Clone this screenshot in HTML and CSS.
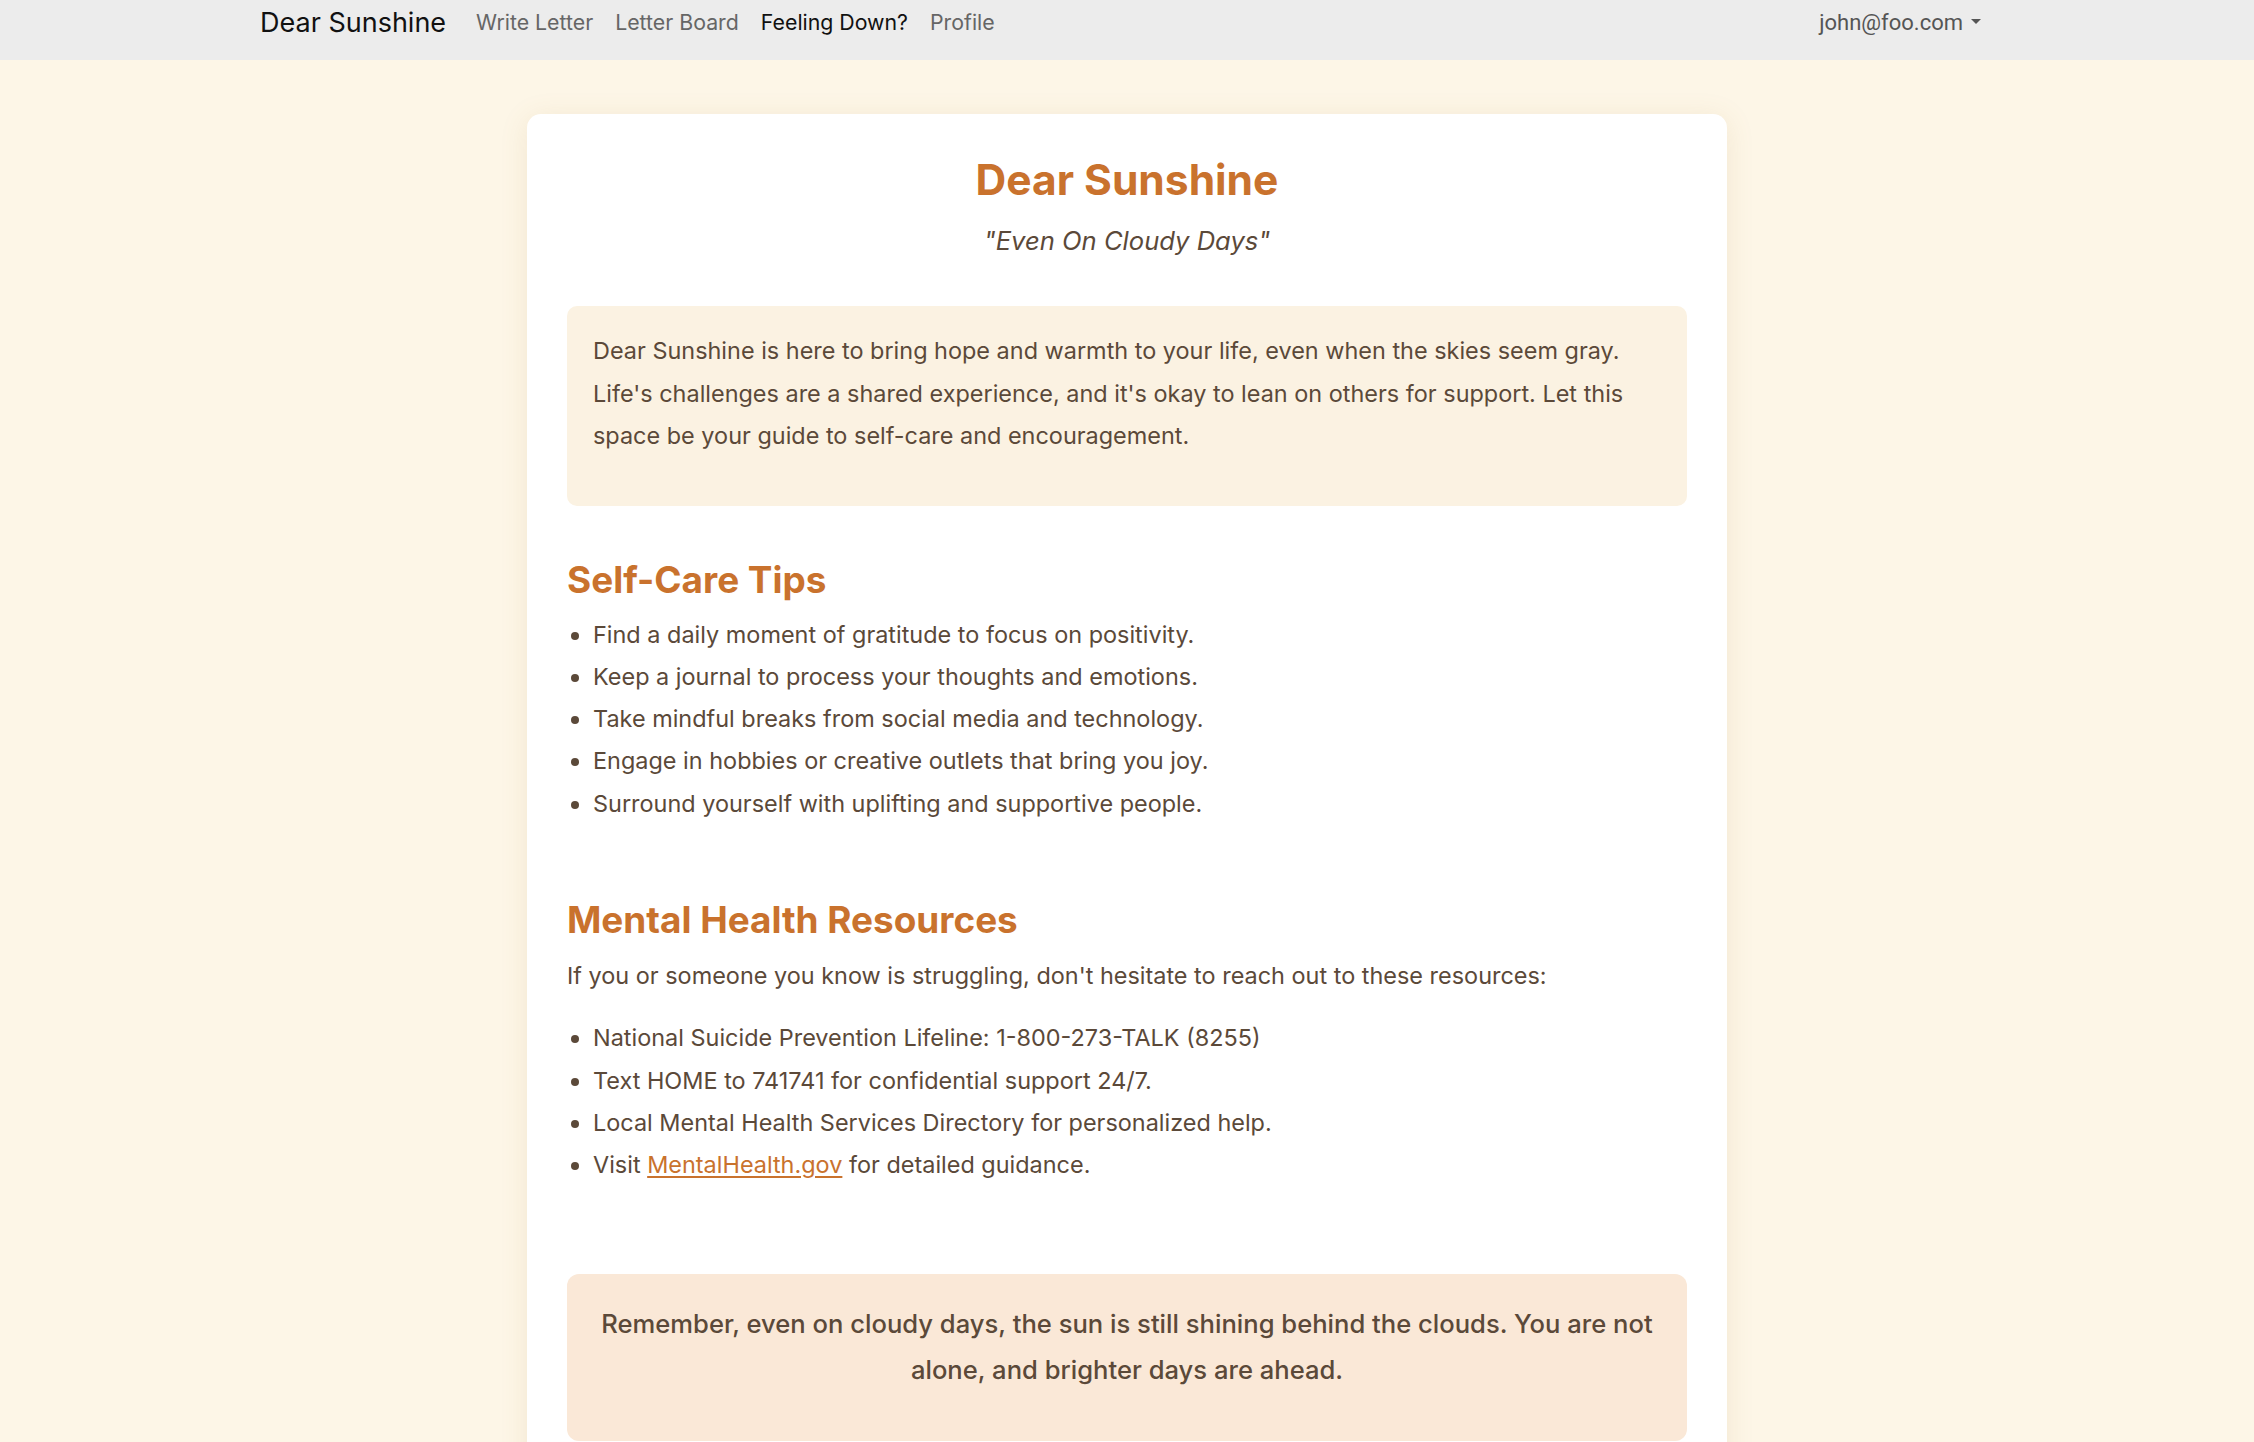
FILE: index.html
```html
<!DOCTYPE html>
<html lang="en">
<head>
<meta charset="utf-8">
<title>Dear Sunshine</title>
<link rel="stylesheet" href="styles.css">
</head>
<body>
<nav class="navbar">
  <div class="nav-inner">
    <div class="nav-left">
      <a class="brand" href="#">Dear Sunshine</a>
      <ul class="nav-links">
        <li><a class="nav-link" href="#">Write Letter</a></li>
        <li><a class="nav-link" href="#">Letter Board</a></li>
        <li><a class="nav-link active" href="#">Feeling Down?</a></li>
        <li><a class="nav-link" href="#">Profile</a></li>
      </ul>
    </div>
    <a class="user-menu" href="#">john@foo.com<span class="caret"></span></a>
  </div>
</nav>

<main class="page">
  <div class="card">
    <h1 class="title">Dear Sunshine</h1>
    <p class="subtitle">"Even On Cloudy Days"</p>

    <div class="intro">
      <p>Dear Sunshine is here to bring hope and warmth to your life, even when the skies seem gray. Life's challenges are a shared experience, and it's okay to lean on others for support. Let this space be your guide to self-care and encouragement.</p>
    </div>

    <section class="tips">
      <h2 class="section-title">Self-Care Tips</h2>
      <ul class="list">
        <li>Find a daily moment of gratitude to focus on positivity.</li>
        <li>Keep a journal to process your thoughts and emotions.</li>
        <li>Take mindful breaks from social media and technology.</li>
        <li>Engage in hobbies or creative outlets that bring you joy.</li>
        <li>Surround yourself with uplifting and supportive people.</li>
      </ul>
    </section>

    <section class="resources">
      <h2 class="section-title">Mental Health Resources</h2>
      <p class="lead">If you or someone you know is struggling, don't hesitate to reach out to these resources:</p>
      <ul class="list list-resources">
        <li>National Suicide Prevention Lifeline: 1-800-273-TALK (8255)</li>
        <li>Text HOME to 741741 for confidential support 24/7.</li>
        <li>Local Mental Health Services Directory for personalized help.</li>
        <li>Visit <a class="link" href="#">MentalHealth.gov</a> for detailed guidance.</li>
      </ul>
    </section>

    <div class="reminder">
      <p>Remember, even on cloudy days, the sun is still shining behind the clouds. You are not alone, and brighter days are ahead.</p>
    </div>
  </div>
</main>
</body>
</html>
```

FILE: styles.css
```css
* { box-sizing: border-box; }

html, body {
  margin: 0;
  padding: 0;
}

body {
  background: #fdf6e7;
  font-family: Inter, "Noto Sans", sans-serif;
  color: #5b4939;
}

a { text-decoration: none; }

/* Navbar */
.navbar {
  background: #ececec;
  height: 60px;
}

.nav-inner {
  width: 1734px;
  margin: 0 auto;
  height: 45px;
  display: flex;
  align-items: center;
  justify-content: space-between;
}

.nav-left {
  display: flex;
  align-items: center;
}

.brand {
  font-size: 27px;
  line-height: 42px;
  color: #111;
  margin-right: 19px;
}

.nav-links {
  list-style: none;
  margin: 0;
  padding: 0;
  display: flex;
}

.nav-link {
  display: block;
  padding: 0 11px;
  font-size: 21.3px;
  line-height: 33px;
  color: #666;
}

.nav-link.active { color: #111; }

.user-menu {
  display: flex;
  align-items: center;
  font-family: Roboto, "Liberation Sans", sans-serif;
  font-size: 22px;
  line-height: 33px;
  color: #555;
  padding-right: 13px;
}

.caret {
  display: inline-block;
  margin-left: 8px;
  margin-top: -2px;
  border-top: 5px solid #555;
  border-left: 5px solid transparent;
  border-right: 5px solid transparent;
}

/* Page */
.page {
  padding-top: 54px;
  padding-bottom: 40px;
}

.card {
  width: 1200px;
  margin: 0 auto;
  background: #fff;
  border-radius: 14px;
  box-shadow: 0 4px 28px rgba(170, 130, 60, 0.13);
  padding: 40px 40px 40px;
}

.title {
  margin: 0;
  text-align: center;
  font-size: 42.5px;
  line-height: 51px;
  font-weight: 700;
  color: #c9722d;
}

.subtitle {
  margin: 17px 0 47px;
  text-align: center;
  font-size: 25.6px;
  line-height: 37px;
  font-style: italic;
  color: #5b4939;
}

.intro {
  background: #fbf2e2;
  border-radius: 10px;
  padding: 24px 26px 25px;
}

.intro p {
  margin: 0 0 23px;
  font-size: 23.45px;
  line-height: 42.5px;
}

.section-title {
  margin: 0;
  font-size: 36.9px;
  line-height: 44px;
  font-weight: 700;
  color: #c9722d;
}

.tips { margin-top: 52px; }
.resources { margin-top: 73px; }

.list {
  margin: 12px 0 0;
  padding-left: 26px;
  font-size: 23.45px;
  line-height: 42.3px;
}

.lead {
  margin: 13px 0 0;
  font-size: 23.45px;
  line-height: 42.3px;
}

.list-resources { margin-top: 20px; }

.link {
  color: #c9722d;
  text-decoration: underline;
  text-underline-offset: 3px;
}

.reminder {
  margin-top: 88px;
  background: #fae8d7;
  border-radius: 12px;
  padding: 27px 28px 25px;
  text-align: center;
}

.reminder p {
  margin: 0 0 23px;
  font-size: 25.6px;
  line-height: 46px;
  font-weight: 500;
}
```
